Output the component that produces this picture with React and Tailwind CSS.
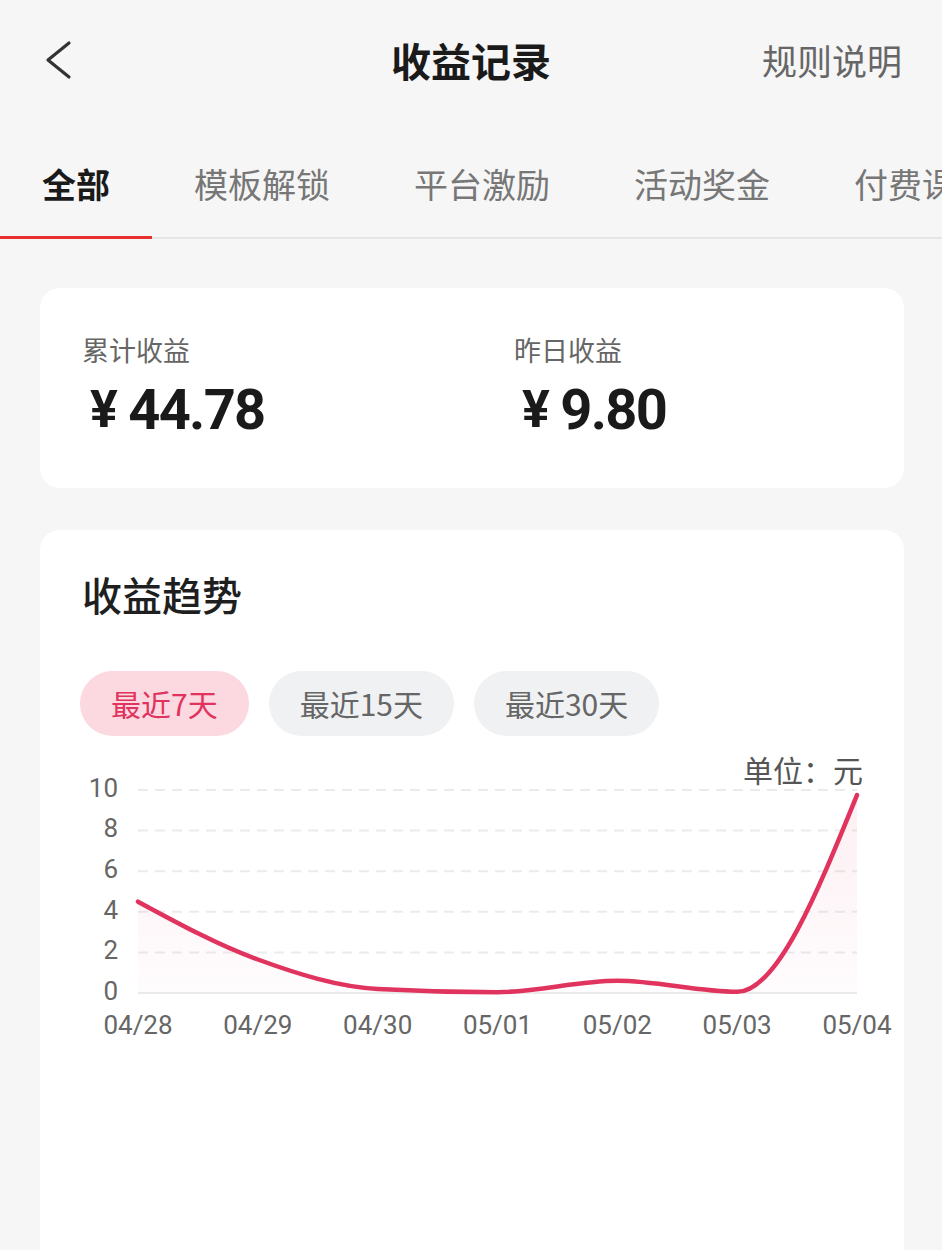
import { useState } from "react";

const tabs = [
  "全部",
  "模板解锁",
  "平台激励",
  "活动奖金",
  "付费课程"
];

const ranges = [
  "最近7天",
  "最近15天",
  "最近30天"
];

const days = [
  "04/28",
  "04/29",
  "04/30",
  "05/01",
  "05/02",
  "05/03",
  "05/04"
];

const values = [4.5, 1.65, 0.2, 0.04, 0.6, 0.06, 9.75];

const CJK = "font-['Noto_Sans_CJK_SC','Noto_Sans',sans-serif]";

// chart geometry, svg coords (svg sits at card left, page y 745)
const X0 = 98;
const STEP = 119.83;
const Y0 = 248;
const UNIT = 20.3;

const px = i => X0 + i * STEP;
const py = v => Y0 - v * UNIT;

// monotone cubic, same idea as d3.curveMonotoneX
function monotonePath(ys) {
  const pts = ys.map((v, i) => [px(i), py(v)]);
  const n = pts.length;
  const t = new Array(n).fill(0);

  for (let i = 1; i < n - 1; i++) {
    const h0 = pts[i][0] - pts[i - 1][0];
    const h1 = pts[i + 1][0] - pts[i][0];
    const s0 = (pts[i][1] - pts[i - 1][1]) / h0;
    const s1 = (pts[i + 1][1] - pts[i][1]) / h1;
    const p = (s0 * h1 + s1 * h0) / (h0 + h1);
    t[i] =
      (Math.sign(s0) + Math.sign(s1)) *
        Math.min(Math.abs(s0), Math.abs(s1), 0.5 * Math.abs(p)) || 0;
  }

  const h = pts[1][0] - pts[0][0];
  t[0] = (3 * (pts[1][1] - pts[0][1]) / h - t[1]) / 2;
  const hl = pts[n - 1][0] - pts[n - 2][0];
  t[n - 1] = (3 * (pts[n - 1][1] - pts[n - 2][1]) / hl - t[n - 2]) / 2;

  let d = `M${pts[0][0]},${pts[0][1]}`;
  for (let i = 0; i < n - 1; i++) {
    const [x0, y0] = pts[i];
    const [x1, y1] = pts[i + 1];
    const dx = (x1 - x0) / 3;
    d += ` C${x0 + dx},${y0 + dx * t[i]} ${x1 - dx},${y1 - dx * t[i + 1]} ${x1},${y1}`;
  }
  return d;
}

function TrendChart() {
  const line = monotonePath(values);
  const area = `${line} L${px(6)},${Y0} L${px(0)},${Y0} Z`;

  return (
    <svg
      width="864"
      height="310"
      viewBox="0 0 864 310"
      className="block"
      style={{ fontFamily: "Roboto, 'Noto Sans', sans-serif" }}
    >
      <defs>
        <linearGradient id="fill" x1="0" y1="0" x2="0" y2="1">
          <stop offset="0%" stopColor="#e23a63" stopOpacity="0.08" />
          <stop offset="100%" stopColor="#e23a63" stopOpacity="0.015" />
        </linearGradient>
      </defs>

      {[2, 4, 6, 8, 10].map(v => (
        <line
          key={v}
          x1={X0}
          x2={px(6)}
          y1={py(v)}
          y2={py(v)}
          stroke="#ebebeb"
          strokeWidth="2"
          strokeDasharray="10 7"
        />
      ))}

      <line
        x1={X0}
        x2={px(6)}
        y1={Y0}
        y2={Y0}
        stroke="#ebebeb"
        strokeWidth="2"
      />

      {[0, 2, 4, 6, 8, 10].map(v => (
        <text
          key={v}
          x="78"
          y={py(v)}
          textAnchor="end"
          dominantBaseline="middle"
          fontSize="26"
          fill="#666"
        >
          {v}
        </text>
      ))}

      {days.map((d, i) => (
        <text
          key={d}
          x={px(i)}
          y="282"
          textAnchor="middle"
          dominantBaseline="middle"
          fontSize="26"
          fill="#666"
        >
          {d}
        </text>
      ))}

      <text
        x="823"
        y="29"
        textAnchor="end"
        dominantBaseline="middle"
        fontSize="30"
        fill="#555"
        style={{ fontFamily: "'Noto Sans CJK SC', sans-serif" }}
      >
        单位：元
      </text>

      <path d={area} fill="url(#fill)" />

      <path
        d={line}
        fill="none"
        stroke="#e0335e"
        strokeWidth="4.5"
        strokeLinecap="round"
      />
    </svg>
  );
}

function Amount({ label, value }) {
  return (
    <div className="flex-1 pl-[42px]">
      <p className={`${CJK} text-[27px] leading-[36px] text-[#666]`}>
        {label}
      </p>
      <p className="mt-[12px] flex items-center pl-[8px] font-['Roboto',sans-serif] font-bold text-[56px] leading-[60px] text-[#1a1a1a] tracking-[-0.03em]">
        <span className="text-[52px]">¥</span>
        <span className="ml-[12px]">{value}</span>
      </p>
    </div>
  );
}

export default function App() {
  const [activeTab, setActiveTab] = useState(0);
  const [activeRange, setActiveRange] = useState(0);

  return (
    <div className={`${CJK} min-h-screen w-[942px] overflow-hidden bg-[#f6f6f6]`}>
      {/* HEADER */}
      <div className="grid h-[120px] grid-cols-[1fr_auto_1fr] items-center">
        <div className="pl-[44px]">
          <svg width="30" height="40" viewBox="0 0 30 40">
            <polyline
              points="25,3 4,20 25,37"
              fill="none"
              stroke="#333"
              strokeWidth="3.2"
              strokeLinecap="round"
              strokeLinejoin="round"
            />
          </svg>
        </div>
        <h1 className="text-[40px] font-bold leading-[48px] text-[#1a1a1a]">
          收益记录
        </h1>
        <div className="pr-[40px] text-right text-[35px] leading-[48px] text-[#666]">
          规则说明
        </div>
      </div>

      {/* TABS */}
      <div className="flex whitespace-nowrap border-b-2 border-[#e6e6e6] pt-[40px]">
        {tabs.map((tab, i) => (
          <button
            key={tab}
            onClick={() => setActiveTab(i)}
            className={`-mb-[2px] shrink-0 px-[42px] pb-[28px] text-[34px] leading-[48px] border-b-[3px] ${
              i === activeTab
                ? "border-[#e8302f] font-bold text-[#1a1a1a]"
                : "border-transparent text-[#777]"
            }`}
          >
            {tab}
          </button>
        ))}
      </div>

      {/* SUMMARY CARD */}
      <div className="ml-[40px] mt-[49px] flex h-[200px] w-[864px] rounded-[20px] bg-white pt-[44px]">
        <Amount label="累计收益" value="44.78" />
        <Amount label="昨日收益" value="9.80" />
      </div>

      {/* TREND CARD */}
      <div className="ml-[40px] mt-[42px] h-[760px] w-[864px] rounded-[20px] bg-white pt-[40px]">
        <div className="px-[42px]">
          <h2 className="text-[40px] font-medium leading-[48px] text-[#1f1f1f]">
            收益趋势
          </h2>

          <div className="-ml-[2px] mt-[53px] flex gap-[20px]">
            {ranges.map((r, i) => (
              <button
                key={r}
                onClick={() => setActiveRange(i)}
                className={`h-[65px] rounded-full px-[31px] text-[30px] ${
                  i === activeRange
                    ? "bg-[#fcd8e0] text-[#e0335e]"
                    : "bg-[#f0f1f3] text-[#666]"
                }`}
              >
                {r}
              </button>
            ))}
          </div>
        </div>

        <div className="mt-[9px]">
          <TrendChart />
        </div>
      </div>
    </div>
  );
}
